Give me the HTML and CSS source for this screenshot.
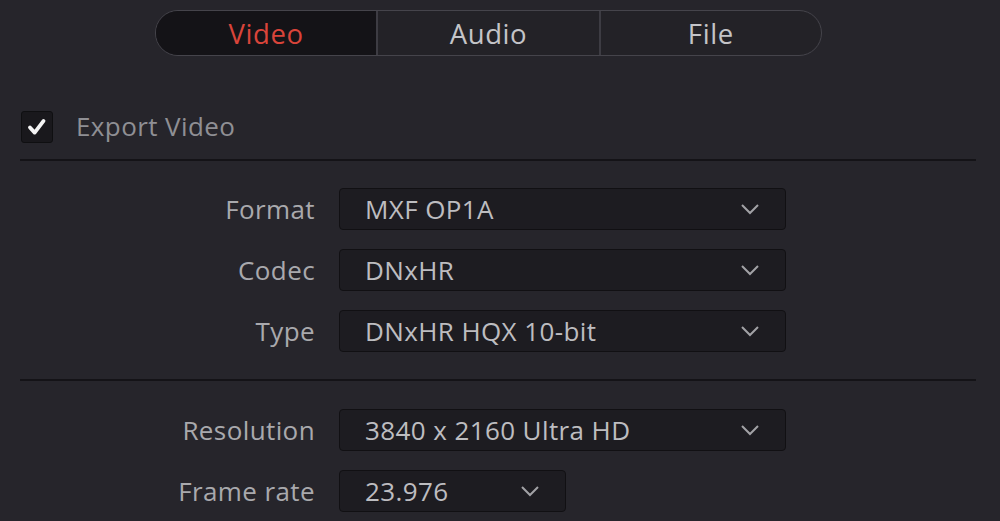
FILE: index.html
```html
<!DOCTYPE html>
<html>
<head>
<meta charset="utf-8">
<link rel="stylesheet" href="styles.css">
</head>
<body>
<div class="panel">
  <div class="tabs">
    <div class="tab active">Video</div>
    <div class="tab">Audio</div>
    <div class="tab">File</div>
  </div>

  <div class="export-row">
    <span class="checkbox">
      <svg viewBox="0 0 32 32" width="32" height="32"><path d="M8.5 16.5 L13.5 22 L23 9.5" fill="none" stroke="#f4f4f4" stroke-width="4" stroke-linecap="round" stroke-linejoin="round"/></svg>
    </span>
    <span class="export-label">Export Video</span>
  </div>

  <div class="sep"></div>

  <div class="form">
    <div class="label">Format</div>
    <div class="select"><span>MXF OP1A</span><svg class="chev" viewBox="0 0 20 12" width="20" height="12"><path d="M2 2 L10 10 L18 2" fill="none" stroke="#a2a2a6" stroke-width="2"/></svg></div>
    <div class="label">Codec</div>
    <div class="select"><span>DNxHR</span><svg class="chev" viewBox="0 0 20 12" width="20" height="12"><path d="M2 2 L10 10 L18 2" fill="none" stroke="#a2a2a6" stroke-width="2"/></svg></div>
    <div class="label">Type</div>
    <div class="select"><span>DNxHR HQX 10-bit</span><svg class="chev" viewBox="0 0 20 12" width="20" height="12"><path d="M2 2 L10 10 L18 2" fill="none" stroke="#a2a2a6" stroke-width="2"/></svg></div>
  </div>

  <div class="sep sep2"></div>

  <div class="form form2">
    <div class="label">Resolution</div>
    <div class="select"><span>3840 x 2160 Ultra HD</span><svg class="chev" viewBox="0 0 20 12" width="20" height="12"><path d="M2 2 L10 10 L18 2" fill="none" stroke="#a2a2a6" stroke-width="2"/></svg></div>
    <div class="label">Frame rate</div>
    <div class="select short"><span>23.976</span><svg class="chev" viewBox="0 0 20 12" width="20" height="12"><path d="M2 2 L10 10 L18 2" fill="none" stroke="#a2a2a6" stroke-width="2"/></svg></div>
  </div>
</div>
</body>
</html>
```

FILE: styles.css
```css
html, body {
  margin: 0;
  padding: 0;
  background: #26252b;
  overflow: hidden;
}
body {
  width: 1000px;
  height: 521px;
  font-family: "Open Sans", "Noto Sans", sans-serif;
}
.panel {
  padding: 10px 24px 0 20px;
}
.tabs {
  display: flex;
  margin-left: 135px;
  width: 667px;
  height: 46px;
  box-sizing: border-box;
  border: 1.5px solid #45444b;
  border-radius: 23px;
  overflow: hidden;
  background: #232227;
}
.tab {
  flex: 1;
  display: flex;
  align-items: center;
  justify-content: center;
  font-size: 27.5px;
  color: #c4c4c8;
  border-left: 2px solid #3d3c43;
  letter-spacing: 0.6px;
}
.tab:first-child {
  border-left: none;
}
.tab.active {
  background: #141317;
  color: #d9443a;
}
.export-row {
  display: flex;
  align-items: center;
  margin-top: 55px;
  height: 32px;
}
.checkbox {
  width: 32px;
  height: 32px;
  margin-left: 1px;
  box-sizing: border-box;
  border: 1.5px solid #0f0f11;
  border-radius: 3px;
  background: #19181c;
  display: flex;
  align-items: center;
  justify-content: center;
}
.checkbox svg {
  display: block;
}
.export-label {
  margin-left: 23px;
  margin-top: -3px;
  font-size: 26px;
  color: #8f8f94;
  letter-spacing: 0.4px;
}
.sep {
  margin-top: 16px;
  height: 2px;
  background: #141317;
}
.sep2 {
  margin-top: 27px;
}
.form {
  display: grid;
  grid-template-columns: 295px 447px;
  column-gap: 24px;
  row-gap: 19px;
  margin-top: 27px;
  align-items: center;
}
.form2 {
  margin-top: 28px;
}
.label {
  text-align: right;
  font-size: 26px;
  color: #a9a9ad;
  letter-spacing: 0.4px;
}
.select {
  height: 42px;
  box-sizing: border-box;
  border: 1.5px solid #111013;
  border-radius: 4px;
  background: #1d1c21;
  display: flex;
  align-items: center;
  justify-content: space-between;
  padding: 0 25px 0 25px;
  font-size: 26px;
  color: #bdbdc0;
  letter-spacing: 0.4px;
}
.select.short {
  width: 227px;
}
.chev {
  display: block;
}
```
